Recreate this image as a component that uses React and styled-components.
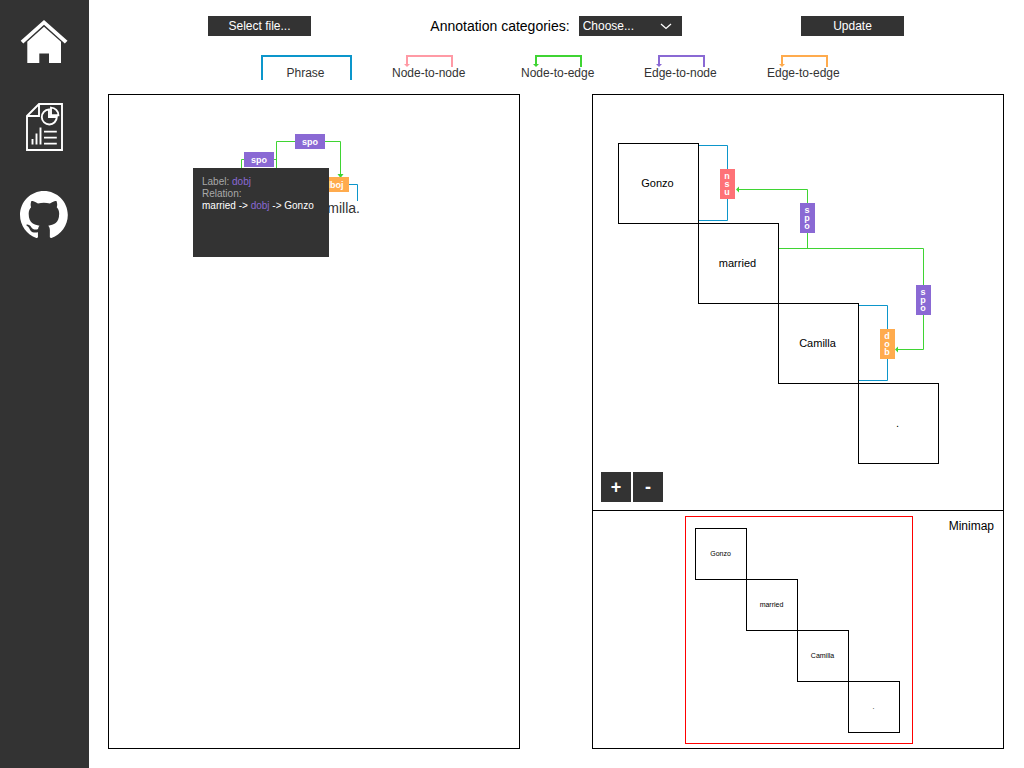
import React from "react";
import styled, { createGlobalStyle } from "styled-components";

const colors = {
  dark: "#333333",
  phrase: "#0c96cb",
  pink: "#ff9aa5",
  red: "#fe7277",
  green: "#3fd433",
  purple: "#8a69d4",
  orange: "#ffab4d",
};

const GlobalStyle = createGlobalStyle`
  * { box-sizing: border-box; }
  body {
    margin: 0;
    background: #fff;
    color: #000;
    font-family: "Liberation Sans", Arial, sans-serif;
  }
`;

const Page = styled.div`
  display: flex;
  min-height: 100vh;
`;

const Sidebar = styled.nav`
  flex: 0 0 89px;
  display: flex;
  flex-direction: column;
  gap: 40px;
  padding: 15px 0 0 20px;
  background: ${colors.dark};
`;

const NavLink = styled.a`
  display: block;
  width: 48px;
  height: 48px;
  color: #fff;

  svg { display: block; }
`;

const Main = styled.main`
  flex: 1;
  min-width: 0;
  display: flex;
  flex-direction: column;
  padding: 16px 20px 19px 19px;
`;

const Toolbar = styled.header`
  display: flex;
  justify-content: space-between;
  align-items: center;
  height: 20px;
  padding: 0 100px;
`;

const DarkButton = styled.button`
  width: 103px;
  height: 20px;
  padding: 0;
  border: 0;
  background: ${colors.dark};
  color: #fff;
  font: 12px/20px "Liberation Sans", Arial, sans-serif;
  cursor: pointer;
`;

const Field = styled.div`
  display: flex;
  align-items: center;
  gap: 9px;
`;

const FieldLabel = styled.label`
  font-size: 14px;
  line-height: 20px;
  white-space: nowrap;
`;

const SelectBox = styled.div`
  position: relative;
  width: 103px;
  height: 20px;

  svg {
    position: absolute;
    top: 7px;
    right: 10px;
    pointer-events: none;
  }
`;

const Select = styled.select`
  display: block;
  width: 100%;
  height: 100%;
  padding: 0 24px 0 4px;
  border: 0;
  border-radius: 0;
  appearance: none;
  background: ${colors.dark};
  color: #fff;
  font: 12px/20px "Liberation Sans", Arial, sans-serif;
`;

const Legend = styled.ul`
  display: grid;
  grid-template-columns: 131fr 129fr 123fr 123fr 74fr;
  margin: 19px 163px 14px 153px;
  padding: 0;
  list-style: none;
  color: ${colors.dark};
  font-size: 12px;
  line-height: 14px;
  white-space: nowrap;
`;

const PhraseItem = styled.li`
  width: 91px;
  height: 25px;
  padding: 9px 2px 0 0;
  border: 2px solid ${colors.phrase};
  border-bottom: 0;
  text-align: center;
`;

const LegendItem = styled.li`
  svg {
    display: block;
    margin-left: 11px;
    overflow: visible;
  }
`;

const Panels = styled.div`
  flex: 1;
  display: grid;
  grid-template-columns: 1fr 1fr;
  gap: 72px;
`;

const Panel = styled.section`
  position: relative;
  display: flex;
  flex-direction: column;
  min-width: 0;
  min-height: 655px;
  border: 1px solid #000;
  overflow: hidden;
`;

const MatrixView = styled.div`
  position: relative;
  flex: 1;
`;

const MinimapView = styled.div`
  position: relative;
  height: 238px;
  border-top: 1px solid #000;
`;

const MinimapTitle = styled.h2`
  position: absolute;
  top: 8px;
  right: 9px;
  margin: 0;
  font-size: 12px;
  font-weight: 400;
  line-height: 14px;
`;

const Drawing = styled.svg`
  display: block;
  font-family: "Liberation Sans", Arial, sans-serif;
`;

const ZoomControls = styled.div`
  position: absolute;
  left: 8px;
  bottom: 8px;
  display: flex;
  gap: 2px;
`;

const ZoomButton = styled.button`
  width: 30px;
  height: 30px;
  padding: 0;
  border: 0;
  background: ${colors.dark};
  color: #fff;
  font: bold 18px/30px "Liberation Sans", Arial, sans-serif;
  cursor: pointer;
`;

const Tooltip = styled.div`
  position: absolute;
  left: 84px;
  top: 73px;
  width: 136px;
  height: 89px;
  padding: 8px 9px;
  background: ${colors.dark};
  color: #a9a9a9;
  font-size: 10px;
  line-height: 12px;
  white-space: nowrap;

  p { margin: 0; }
`;

const Relation = styled.p`
  color: #fff;
`;

const Accent = styled.span`
  color: ${colors.purple};
`;

function HomeIcon() {
  return (
    <svg width="48" height="48" viewBox="0 0 48 48" fill="currentColor" aria-hidden="true">
      <path d="M24 5 0.7 25.7 3.3 28.5 24 9.8 44.8 28.5 47.5 25.7Z" />
      <path d="M24 11.8 7.3 26.8V48.4H19.3V38.5H29V48.4H41V26.8Z" />
    </svg>
  );
}

function ReportIcon() {
  return (
    <svg width="48" height="48" viewBox="0 0 48 48" fill="none" stroke="currentColor" strokeWidth="1.9" aria-hidden="true">
      <path d="M19 1H42V47H7V13ZM19 1V13H7" />
      <path d="M29 6.5A7.5 7.5 0 1 0 36.8 14H29Z" />
      <path d="M31 4.6A7.6 7.6 0 0 1 38.4 12.2H31Z" />
      <path d="M12.5 36V41.5M16.5 30.5V41.5M20.5 24.5V41.5M24 28.6H36.8M24 34.6H36.8M24 40.6H36.8" />
    </svg>
  );
}

function GithubIcon() {
  return (
    <svg width="48" height="47" viewBox="0 0 98 96" fill="currentColor" aria-hidden="true">
      <path fillRule="evenodd" clipRule="evenodd" d="M48.854 0C21.839 0 0 22 0 49.217c0 21.756 13.993 40.172 33.405 46.69 2.427.49 3.316-1.059 3.316-2.362 0-1.141-.08-5.052-.08-9.127-13.59 2.934-16.42-5.867-16.42-5.867-2.184-5.704-5.42-7.17-5.42-7.17-4.448-3.015.324-3.015.324-3.015 4.934.326 7.523 5.052 7.523 5.052 4.367 7.496 11.404 5.378 14.235 4.074.404-3.178 1.699-5.378 3.074-6.6-10.839-1.141-22.243-5.378-22.243-24.283 0-5.378 1.94-9.778 5.014-13.2-.485-1.222-2.184-6.275.486-13.038 0 0 4.125-1.304 13.426 5.052a46.97 46.97 0 0 1 12.214-1.63c4.125 0 8.33.571 12.213 1.63 9.302-6.356 13.427-5.052 13.427-5.052 2.67 6.763.97 11.816.485 13.038 3.155 3.422 5.015 7.822 5.015 13.2 0 18.905-11.404 23.06-22.324 24.283 1.78 1.548 3.316 4.481 3.316 9.126 0 6.6-.08 11.897-.08 13.526 0 1.304.89 2.853 3.316 2.364 19.412-6.52 33.405-24.935 33.405-46.691C97.707 22 75.788 0 48.854 0z" />
    </svg>
  );
}

function LegendArrow({ color }) {
  return (
    <svg width="52" height="11" viewBox="0 0 52 11" aria-hidden="true">
      <path d="M4 10V1H49V12" fill="none" stroke={color} strokeWidth="2" />
      <path d="M1 9H7L4 12Z" fill={color} />
    </svg>
  );
}

function Chip({ x, y, fill, text }) {
  return (
    <g>
      <rect x={x} y={y} width="30" height="15" fill={fill} />
      <text x={x + 15} y={y + 11} textAnchor="middle" fontSize="9" fontWeight="700" fill="#fff">{text}</text>
    </g>
  );
}

function TallChip({ x, y, fill, text }) {
  return (
    <g>
      <rect x={x} y={y} width="15" height="30" fill={fill} />
      {text.split("").map((letter, i) => (
        <text key={i} x={x + 7} y={y + 10 + i * 8} textAnchor="middle" fontSize="9" fontWeight="700" fill="#fff">
          {letter}
        </text>
      ))}
    </g>
  );
}

const words = ["Gonzo", "married", "Camilla", "."];

function WordBoxes({ x, y, size, fontSize, baseline }) {
  return words.map((word, i) => (
    <g key={word}>
      <rect x={x + i * size} y={y + i * size} width={size} height={size} fill="none" stroke="#000" />
      <text x={x + i * size + Math.floor((size - 1) / 2)} y={y + i * size + baseline} textAnchor="middle" fontSize={fontSize}>
        {word}
      </text>
    </g>
  ));
}

function SentenceDrawing() {
  return (
    <Drawing width="410" height="160" viewBox="0 0 410 160">
      <g fill="none" stroke={colors.green}>
        <path d="M132.5 80V64.5H167.5M167.5 80V46.5H231.5V80" />
      </g>
      <path d="M228.5 79H234.5L231.5 83Z" fill={colors.green} />
      <path d="M240 89.5H248.5V106" fill="none" stroke={colors.phrase} />
      <Chip x={135} y={57} fill={colors.purple} text="spo" />
      <Chip x={186} y={39} fill={colors.purple} text="spo" />
      <Chip x={210} y={82} fill={colors.orange} text="dboj" />
      <text x="251" y="118" textAnchor="end" fontSize="14" fill={colors.dark}>milla.</text>
    </Drawing>
  );
}

function MatrixDrawing() {
  return (
    <Drawing width="410" height="400" viewBox="0 0 410 400">
      <g fill="none" stroke={colors.phrase}>
        <path d="M105.5 50.5H134.5V125.5H105.5" />
        <path d="M265.5 210.5H294.5V285.5H265.5" />
      </g>
      <g fill="none" stroke={colors.green}>
        <path d="M145 94.5H214.5V153.5" />
        <path d="M186 153.5H330.5V254.5H304" />
      </g>
      <g fill={colors.green}>
        <path d="M143 94.5 146 91.5V97.5Z" />
        <path d="M302 254.5 305 251.5V257.5Z" />
      </g>
      <WordBoxes x={25.5} y={48.5} size={80} fontSize={11} baseline={43} />
      <TallChip x={127} y={74} fill={colors.red} text="nsu" />
      <TallChip x={207} y={108} fill={colors.purple} text="spo" />
      <TallChip x={323} y={190} fill={colors.purple} text="spo" />
      <TallChip x={287} y={234} fill={colors.orange} text="dob" />
    </Drawing>
  );
}

function MinimapDrawing() {
  return (
    <Drawing width="410" height="237" viewBox="0 0 410 237">
      <rect x="92.5" y="5.5" width="227" height="227" fill="none" stroke="#f00" />
      <WordBoxes x={102.5} y={17.5} size={51} fontSize={7} baseline={27} />
    </Drawing>
  );
}

export default function App() {
  return (
    <Page>
      <GlobalStyle />
      <Sidebar>
        <NavLink href="#home" aria-label="Home"><HomeIcon /></NavLink>
        <NavLink href="#report" aria-label="Report"><ReportIcon /></NavLink>
        <NavLink href="#github" aria-label="GitHub"><GithubIcon /></NavLink>
      </Sidebar>
      <Main>
        <Toolbar>
          <DarkButton type="button">Select file...</DarkButton>
          <Field>
            <FieldLabel htmlFor="category">Annotation categories:</FieldLabel>
            <SelectBox>
              <Select id="category" defaultValue="">
                <option value="">Choose...</option>
              </Select>
              <svg width="12" height="7" viewBox="0 0 12 7" fill="none" stroke="#fff" strokeWidth="1.3" aria-hidden="true">
                <path d="M1 1 6 5.5 11 1" />
              </svg>
            </SelectBox>
          </Field>
          <DarkButton type="button">Update</DarkButton>
        </Toolbar>
        <Legend>
          <PhraseItem>Phrase</PhraseItem>
          <LegendItem><LegendArrow color={colors.pink} />Node-to-node</LegendItem>
          <LegendItem><LegendArrow color={colors.green} />Node-to-edge</LegendItem>
          <LegendItem><LegendArrow color={colors.purple} />Edge-to-node</LegendItem>
          <LegendItem><LegendArrow color={colors.orange} />Edge-to-edge</LegendItem>
        </Legend>
        <Panels>
          <Panel>
            <SentenceDrawing />
            <Tooltip role="tooltip">
              <p>Label: <Accent>dobj</Accent></p>
              <p>Relation:</p>
              <Relation>married -&gt; <Accent>dobj</Accent> -&gt; Gonzo</Relation>
            </Tooltip>
          </Panel>
          <Panel>
            <MatrixView>
              <MatrixDrawing />
              <ZoomControls>
                <ZoomButton type="button" aria-label="Zoom in">+</ZoomButton>
                <ZoomButton type="button" aria-label="Zoom out">-</ZoomButton>
              </ZoomControls>
            </MatrixView>
            <MinimapView>
              <MinimapDrawing />
              <MinimapTitle>Minimap</MinimapTitle>
            </MinimapView>
          </Panel>
        </Panels>
      </Main>
    </Page>
  );
}
